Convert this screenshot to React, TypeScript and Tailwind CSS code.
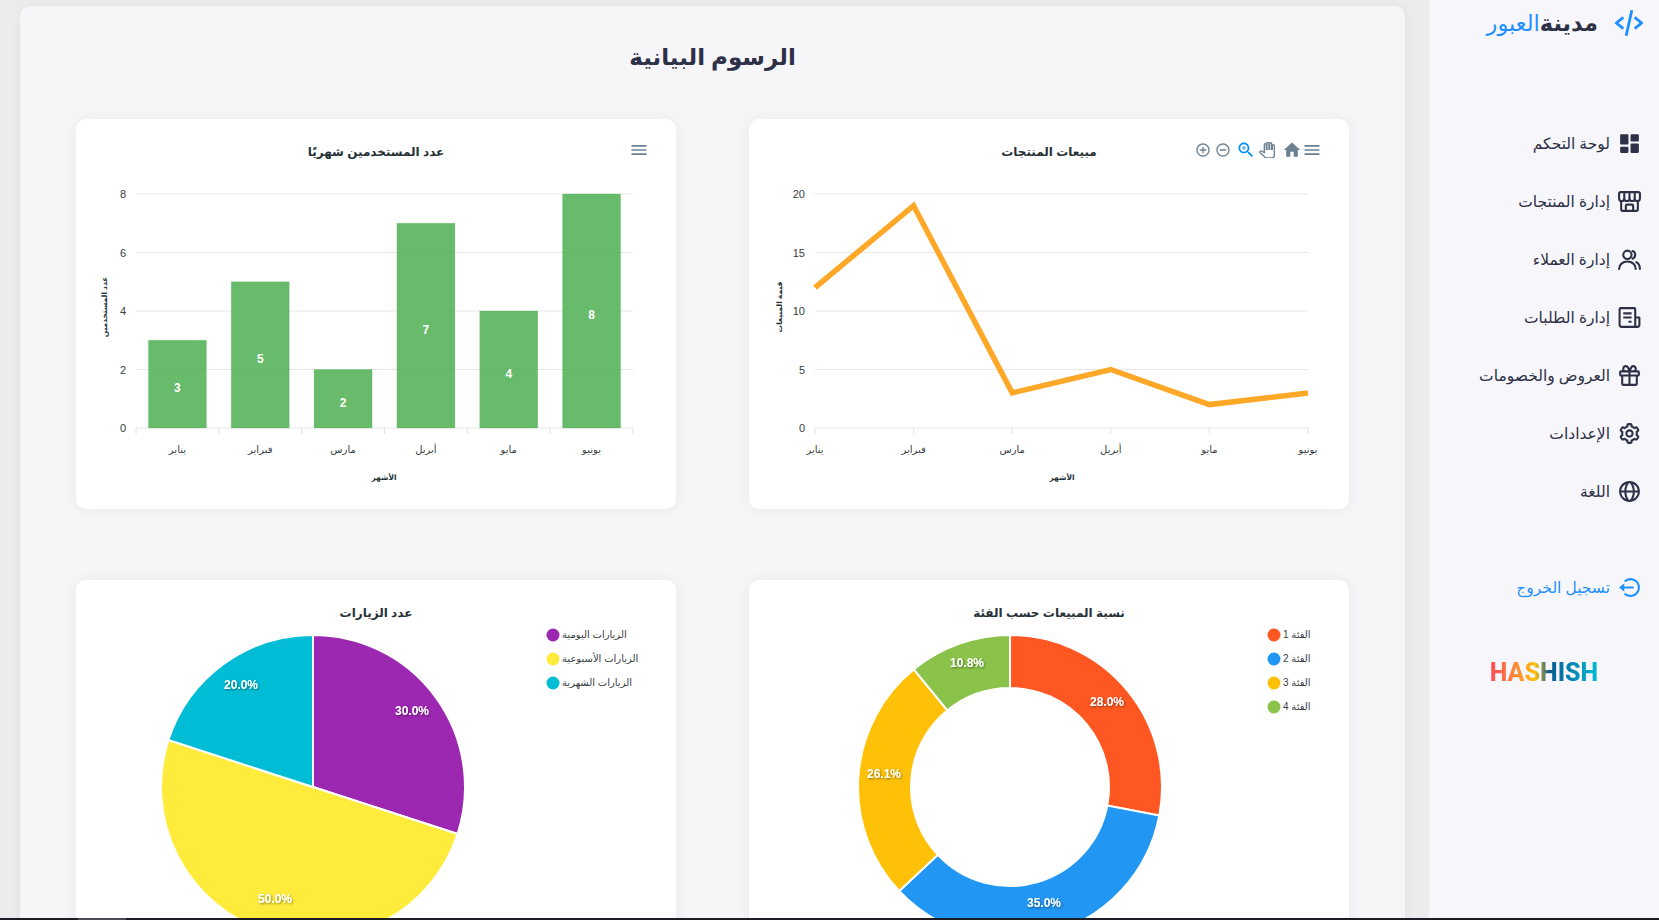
import React from 'react';
import { BiSolidDashboard, BiGift, BiCog, BiGlobe, BiLogOutCircle, BiCodeAlt } from 'react-icons/bi';

const months = ['يناير', 'فبراير', 'مارس', 'أبريل', 'مايو', 'يونيو'];
const chartFont = '"Liberation Sans", Arial, "DejaVu Sans", sans-serif';

type IconProps = { size?: number; className?: string };

const StoreIcon: React.FC<IconProps> = ({ size = 25, className }) => (
    <svg width={size} height={size} viewBox="0 0 24 24" fill="none" stroke="currentColor" strokeWidth={2} strokeLinejoin="round" className={className}>
        <path d="M3.5 3h17a1.5 1.5 0 0 1 1.5 1.5V9a2.5 2.5 0 0 1-5 0 2.5 2.5 0 0 1-5 0 2.5 2.5 0 0 1-5 0 2.5 2.5 0 0 1-5 0V4.5A1.5 1.5 0 0 1 3.5 3z" />
        <path d="M7 3v6M12 3v6M17 3v6" />
        <path d="M4 11.5V20a1 1 0 0 0 1 1h14a1 1 0 0 0 1-1v-8.5" />
        <path d="M8.5 21v-5a1 1 0 0 1 1-1h5a1 1 0 0 1 1 1v5" />
    </svg>
);

const UsersIcon: React.FC<IconProps> = ({ size = 25, className }) => (
    <svg width={size} height={size} viewBox="0 0 24 24" fill="none" stroke="currentColor" strokeWidth={2} strokeLinecap="round" className={className}>
        <circle cx="10" cy="7.5" r="4" />
        <path d="M2 21c0-4.2 3.5-7 8-7s8 2.8 8 7" />
        <path d="M15 3.8a4 4 0 0 1 0 7.4" />
        <path d="M18.5 14.5c2.2 1.2 3.5 3.6 3.5 6.5" />
    </svg>
);

const OrdersIcon: React.FC<IconProps> = ({ size = 25, className }) => (
    <svg width={size} height={size} viewBox="0 0 24 24" fill="none" stroke="currentColor" strokeWidth={2} strokeLinejoin="round" className={className}>
        <path d="M2.5 4a1 1 0 0 1 1-1h13a1 1 0 0 1 1 1v17h-13a2 2 0 0 1-2-2z" />
        <path d="M17.5 12h4v7a2 2 0 0 1-2 2h-2" />
        <path d="M6 8h8M6 12h8M11 16h3" />
    </svg>
);

const navItems = [
    { label: 'لوحة التحكم', icon: BiSolidDashboard },
    { label: 'إدارة المنتجات', icon: StoreIcon },
    { label: 'إدارة العملاء', icon: UsersIcon },
    { label: 'إدارة الطلبات', icon: OrdersIcon },
    { label: 'العروض والخصومات', icon: BiGift },
    { label: 'الإعدادات', icon: BiCog },
    { label: 'اللغة', icon: BiGlobe },
];

const Sidebar: React.FC = () => (
    <aside className="w-[230px] shrink-0 self-stretch bg-[#f7f7fb]">
        <div className="flex h-[46px] items-center gap-[14px] pr-[13px] text-[22.5px] leading-none">
            <BiCodeAlt className="shrink-0 text-[#1e90ff]" size={34} />
            <span className="font-bold text-[#2d3047]">مدينة<span className="font-normal text-[#1e90ff]">العبور</span></span>
        </div>
        <nav className="mt-[68px]">
            {navItems.map(item => (
                <a key={item.label} className="flex h-[58px] items-center gap-[7px] pr-[17px] text-[15.5px] text-[#2d3047]">
                    <item.icon className="shrink-0" size={25} />
                    <span className="pt-[2px]">{item.label}</span>
                </a>
            ))}
        </nav>
        <a className="mt-[38px] flex h-[58px] items-center gap-[7px] pr-[17px] text-[15.5px] text-[#1e90ff]">
            <BiLogOutCircle className="shrink-0" size={25} />
            <span className="pt-[2px]">تسجيل الخروج</span>
        </a>
        <div dir="ltr" className="mt-[42px] text-center text-[25px] font-extrabold leading-[30px] font-['Roboto',sans-serif]">
            <span className="bg-[linear-gradient(90deg,#ff4b5c,#ff9a2b_30%,#ffc107_42%,#0b5a96_55%,#00bcd4_100%)] bg-clip-text text-transparent">HASHISH</span>
        </div>
    </aside>
);

const ChartTitle: React.FC<{ y?: number; children: string }> = ({ y = 36, children }) => (
    <text x={300} y={y} textAnchor="middle" fontSize={12} fontWeight={700} fill="#263238">{children}</text>
);

const MenuIcon: React.FC<{ x: number; y: number }> = ({ x, y }) => (
    <svg x={x} y={y} width={20} height={20} viewBox="0 0 24 24" fill="#6e8192">
        <path d="M3 18h18v-2H3v2zm0-5h18v-2H3v2zm0-7v2h18V6H3z" />
    </svg>
);

const Axes: React.FC<{ left: number; right: number; yLabels: number[]; ticks: number[]; labelX: number[]; titleX: number; yTitle: string; yTitleX: number }> = ({ left, right, yLabels, ticks, labelX, titleX, yTitle, yTitleX }) => {
    const step = 234 / (yLabels.length - 1);
    return (
        <g>
            {yLabels.map((v, i) => (
                <g key={v}>
                    <line x1={left} x2={right} y1={74 + i * step} y2={74 + i * step} stroke="#e7e7e7" />
                    <text x={left - 10} y={78 + i * step} textAnchor="end" fontSize={11} fill="#373d3f">{v}</text>
                </g>
            ))}
            {ticks.map(x => <line key={x} x1={x} x2={x} y1={308} y2={314} stroke="#e0e0e0" />)}
            {labelX.map((x, i) => <text key={x} x={x} y={333} textAnchor="middle" fontSize={10} fill="#373d3f">{months[i]}</text>)}
            <text x={titleX} y={360} textAnchor="middle" fontSize={7.5} fontWeight={700} fill="#263238">الأشهر</text>
            <text transform={`translate(${yTitleX} 187) rotate(-90)`} textAnchor="middle" fontSize={7.5} fontWeight={700} fill="#263238">{yTitle}</text>
        </g>
    );
};

const LineCard: React.FC = () => {
    const values = [12, 19, 3, 5, 2, 3];
    const xs = values.map((_, i) => 66 + i * 98.6);
    return (
        <svg width={600} height={390} viewBox="0 -1 600 390" fontFamily={chartFont}>
            <ChartTitle>مبيعات المنتجات</ChartTitle>
            <g fill="#6e8192">
                <svg x={446} y={22} width={16} height={16} viewBox="0 0 24 24"><path d="M13 7h-2v4H7v2h4v4h2v-4h4v-2h-4V7zm-1-5C6.48 2 2 6.48 2 12s4.48 10 10 10 10-4.48 10-10S17.52 2 12 2zm0 18c-4.41 0-8-3.59-8-8s3.59-8 8-8 8 3.59 8 8-3.59 8-8 8z" /></svg>
                <svg x={466} y={22} width={16} height={16} viewBox="0 0 24 24"><path d="M7 11v2h10v-2H7zm5-9C6.48 2 2 6.48 2 12s4.48 10 10 10 10-4.48 10-10S17.52 2 12 2zm0 18c-4.41 0-8-3.59-8-8s3.59-8 8-8 8 3.59 8 8-3.59 8-8 8z" /></svg>
                <svg x={487} y={20} width={20} height={20} viewBox="0 0 24 24" fill="#008ffb"><path d="M15.5 14h-.79l-.28-.27C15.41 12.59 16 11.11 16 9.5 16 5.91 13.09 3 9.5 3S3 5.91 3 9.5 5.91 16 9.5 16c1.61 0 3.09-.59 4.23-1.57l.27.28v.79l5 4.99L20.49 19l-4.99-5zm-6 0C7.01 14 5 11.99 5 9.5S7.01 5 9.5 5 14 7.01 14 9.5 11.99 14 9.5 14z" /><path d="M12 10h-2v2H9v-2H7V9h2V7h1v2h2v1z" /></svg>
                <svg x={510} y={22} width={16} height={16} viewBox="0 0 24 24" fill="#fff" stroke="#6e8192" strokeWidth={2}><path d="M23 5.5V20c0 2.2-1.8 4-4 4h-7.3c-1.08 0-2.1-.43-2.85-1.19L1 14.83s1.26-1.23 1.3-1.25c.22-.19.49-.29.79-.29.22 0 .42.06.6.16.04.01 4.31 2.46 4.31 2.46V4c0-.83.67-1.5 1.5-1.5S11 3.17 11 4v7h1V1.5c0-.83.67-1.5 1.5-1.5S15 .67 15 1.5V11h1V2.5c0-.83.67-1.5 1.5-1.5s1.5.67 1.5 1.5V11h1V5.5c0-.83.67-1.5 1.5-1.5s1.5.67 1.5 1.5z" /></svg>
                <svg x={533} y={20} width={20} height={20} viewBox="0 0 24 24"><path d="M10 20v-6h4v6h5v-8h3L12 3 2 12h3v8z" /></svg>
            </g>
            <MenuIcon x={553} y={20} />
            <Axes left={66} right={559} yLabels={[20, 15, 10, 5, 0]} ticks={xs} labelX={xs} titleX={313} yTitle="قيمة المبيعات" yTitleX={33} />
            <polyline fill="none" stroke="#ffa726" strokeWidth={5.5} points={values.map((v, i) => `${xs[i]},${308 - v * 11.7}`).join(' ')} />
        </svg>
    );
};

const BarCard: React.FC = () => {
    const values = [3, 5, 2, 7, 4, 8];
    const band = 497 / 6;
    const centers = values.map((_, i) => 60 + band * (i + 0.5));
    return (
        <svg width={600} height={390} viewBox="0 -1 600 390" fontFamily={chartFont}>
            <ChartTitle>عدد المستخدمين شهريًا</ChartTitle>
            <MenuIcon x={553} y={20} />
            <Axes left={60} right={557} yLabels={[8, 6, 4, 2, 0]} ticks={[0, 1, 2, 3, 4, 5, 6].map(i => 60 + band * i)} labelX={centers} titleX={308} yTitle="عدد المستخدمين" yTitleX={31} />
            {values.map((v, i) => (
                <g key={i}>
                    <rect x={centers[i] - 29} y={308 - v * 29.25} width={58} height={v * 29.25} fill="#4caf50" fillOpacity={0.85} stroke="#4caf50" strokeOpacity={0.2} />
                    <text x={centers[i]} y={308 - v * 14.625 + 8} textAnchor="middle" fontSize={12} fontWeight={700} fill="#fff">{v}</text>
                </g>
            ))}
        </svg>
    );
};

const polar = (cx: number, cy: number, r: number, turn: number) => {
    const a = turn * Math.PI * 2;
    return [cx + r * Math.sin(a), cy - r * Math.cos(a)];
};

const slicePath = (cx: number, cy: number, r: number, inner: number, from: number, to: number) => {
    const [x1, y1] = polar(cx, cy, r, from);
    const [x2, y2] = polar(cx, cy, r, to);
    const large = to - from > 0.5 ? 1 : 0;
    if (inner === 0) return `M${cx} ${cy}L${x1} ${y1}A${r} ${r} 0 ${large} 1 ${x2} ${y2}Z`;
    const [x3, y3] = polar(cx, cy, inner, to);
    const [x4, y4] = polar(cx, cy, inner, from);
    return `M${x1} ${y1}A${r} ${r} 0 ${large} 1 ${x2} ${y2}L${x3} ${y3}A${inner} ${inner} 0 ${large} 0 ${x4} ${y4}Z`;
};

type Slice = { share: number; color: string; label: string; legend: string; lx: number; ly: number };

const RoundCard: React.FC<{ title: string; slices: Slice[]; cx: number; inner: number; dotX: number }> = ({ title, slices, cx, inner, dotX }) => {
    let start = 0;
    return (
        <svg width={600} height={390} fontFamily={chartFont}>
            <defs>
                <filter id="label-shadow" x="-20%" y="-40%" width="140%" height="180%">
                    <feDropShadow dx={1} dy={1} stdDeviation={1} floodColor="#000" floodOpacity={0.45} />
                </filter>
            </defs>
            <ChartTitle y={37}>{title}</ChartTitle>
            {slices.map(s => {
                const from = start;
                start += s.share;
                return <path key={s.color} d={slicePath(cx, 207, 152, inner, from, start)} fill={s.color} stroke="#fff" strokeWidth={2} />;
            })}
            {slices.map(s => (
                <text key={s.label} x={s.lx} y={s.ly} textAnchor="middle" fontSize={12} fontWeight={700} fill="#fff" filter="url(#label-shadow)">{s.label}</text>
            ))}
            {slices.map((s, i) => (
                <g key={s.legend}>
                    <circle cx={dotX} cy={55 + i * 24} r={6.5} fill={s.color} />
                    <text x={dotX + 9} y={58 + i * 24} direction="rtl" textAnchor="end" fontSize={10} fill="#373d3f">{s.legend}</text>
                </g>
            ))}
        </svg>
    );
};

const pieSlices: Slice[] = [
    { share: 0.3, color: '#9c27b0', label: '30.0%', legend: 'الزيارات اليومية', lx: 336, ly: 135 },
    { share: 0.5, color: '#ffeb3b', label: '50.0%', legend: 'الزيارات الأسبوعية', lx: 199, ly: 323 },
    { share: 0.2, color: '#00bcd4', label: '20.0%', legend: 'الزيارات الشهرية', lx: 165, ly: 109 },
];

const donutSlices: Slice[] = [
    { share: 0.28, color: '#ff5722', label: '28.0%', legend: 'الفئة 1', lx: 358, ly: 126 },
    { share: 0.35, color: '#2196f3', label: '35.0%', legend: 'الفئة 2', lx: 295, ly: 327 },
    { share: 0.261, color: '#ffc107', label: '26.1%', legend: 'الفئة 3', lx: 135, ly: 198 },
    { share: 0.109, color: '#8bc34a', label: '10.8%', legend: 'الفئة 4', lx: 218, ly: 87 },
];

const Card: React.FC<{ children: React.ReactNode }> = ({ children }) => (
    <div dir="ltr" className="h-[390px] w-[600px] rounded-[10px] bg-white shadow-[0_0_15px_rgba(0,0,0,0.06)]">{children}</div>
);

const App: React.FC = () => (
    <div dir="rtl" className="flex h-[920px] flex-col overflow-hidden bg-[#ececec] font-['Open_Sans','DejaVu_Sans',sans-serif]">
        <div className="flex min-h-0 flex-1 items-start">
            <Sidebar />
            <main className="ml-5 mr-6 mt-1.5 flex-1 rounded-[10px] bg-[#f6f6f9] px-14 pb-10 shadow-[0_0_12px_rgba(0,0,0,0.05)]">
                <h1 className="pb-[41px] pt-[28px] text-center text-[23px] font-bold leading-[44px] text-[#2d3047]">الرسوم البيانية</h1>
                <div className="grid grid-cols-[600px_600px] justify-between gap-y-[71px]">
                    <Card><LineCard /></Card>
                    <Card><BarCard /></Card>
                    <Card><RoundCard title="نسبة المبيعات حسب الفئة" slices={donutSlices} cx={261} inner={99} dotX={525} /></Card>
                    <Card><RoundCard title="عدد الزيارات" slices={pieSlices} cx={237} inner={0} dotX={477} /></Card>
                </div>
            </main>
        </div>
        <div dir="ltr" className="flex h-[2px] shrink-0 bg-[#1c1c24]">
            <div className="ml-[78px] w-[48px] bg-[#4a4a52]" />
        </div>
    </div>
);

export default App;
